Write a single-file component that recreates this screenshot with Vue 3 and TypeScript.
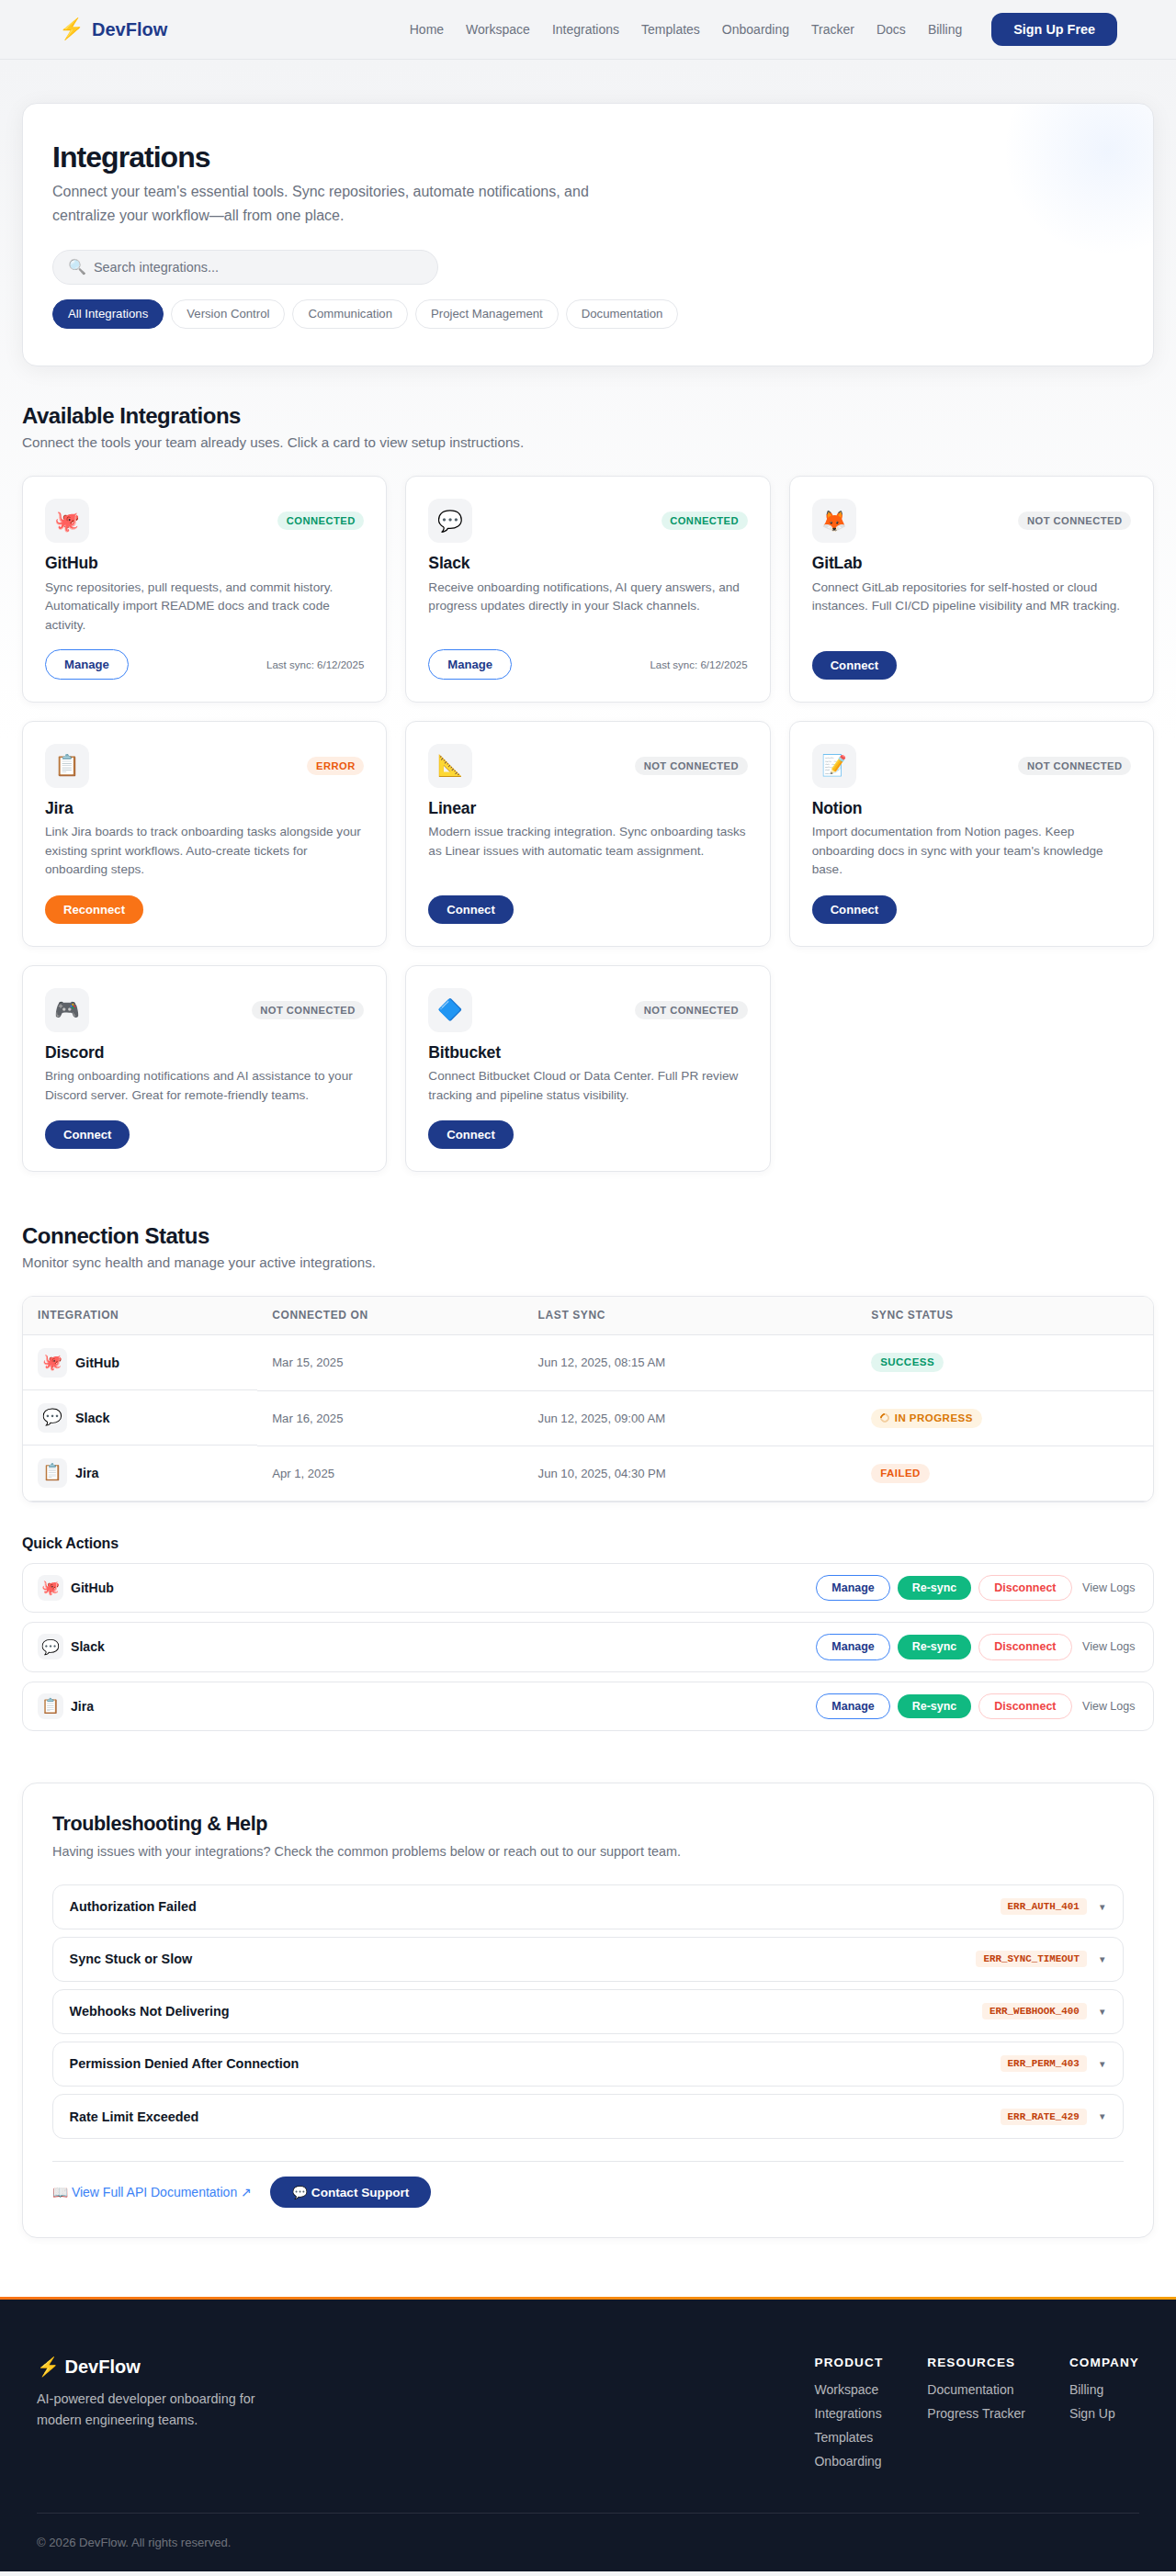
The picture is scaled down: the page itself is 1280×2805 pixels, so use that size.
<script setup lang="ts">
interface Integration {
  icon: string
  name: string
  description: string
  status: 'connected' | 'error' | 'idle'
  lastSync?: string
}

interface Connection {
  icon: string
  name: string
  connectedOn: string
  lastSync: string
  state: 'success' | 'progress' | 'failed'
}

const navLinks: string[] = ['Home', 'Workspace', 'Integrations', 'Templates', 'Onboarding', 'Tracker', 'Docs', 'Billing']

const filters: string[] = ['All Integrations', 'Version Control', 'Communication', 'Project Management', 'Documentation']

const integrations: Integration[] = [
  { icon: '🐙', name: 'GitHub', description: 'Sync repositories, pull requests, and commit history. Automatically import README docs and track code activity.', status: 'connected', lastSync: '6/12/2025' },
  { icon: '💬', name: 'Slack', description: 'Receive onboarding notifications, AI query answers, and progress updates directly in your Slack channels.', status: 'connected', lastSync: '6/12/2025' },
  { icon: '🦊', name: 'GitLab', description: 'Connect GitLab repositories for self-hosted or cloud instances. Full CI/CD pipeline visibility and MR tracking.', status: 'idle' },
  { icon: '📋', name: 'Jira', description: 'Link Jira boards to track onboarding tasks alongside your existing sprint workflows. Auto-create tickets for onboarding steps.', status: 'error' },
  { icon: '📐', name: 'Linear', description: 'Modern issue tracking integration. Sync onboarding tasks as Linear issues with automatic team assignment.', status: 'idle' },
  { icon: '📝', name: 'Notion', description: "Import documentation from Notion pages. Keep onboarding docs in sync with your team's knowledge base.", status: 'idle' },
  { icon: '🎮', name: 'Discord', description: 'Bring onboarding notifications and AI assistance to your Discord server. Great for remote-friendly teams.', status: 'idle' },
  { icon: '🔷', name: 'Bitbucket', description: 'Connect Bitbucket Cloud or Data Center. Full PR review tracking and pipeline status visibility.', status: 'idle' },
]

const statusLabel: Record<Integration['status'], string> = {
  connected: 'CONNECTED',
  error: 'ERROR',
  idle: 'NOT CONNECTED',
}

const actionLabel: Record<Integration['status'], string> = {
  connected: 'Manage',
  error: 'Reconnect',
  idle: 'Connect',
}

const connections: Connection[] = [
  { icon: '🐙', name: 'GitHub', connectedOn: 'Mar 15, 2025', lastSync: 'Jun 12, 2025, 08:15 AM', state: 'success' },
  { icon: '💬', name: 'Slack', connectedOn: 'Mar 16, 2025', lastSync: 'Jun 12, 2025, 09:00 AM', state: 'progress' },
  { icon: '📋', name: 'Jira', connectedOn: 'Apr 1, 2025', lastSync: 'Jun 10, 2025, 04:30 PM', state: 'failed' },
]

const stateLabel: Record<Connection['state'], string> = {
  success: 'SUCCESS',
  progress: 'IN PROGRESS',
  failed: 'FAILED',
}

const issues: { title: string; code: string }[] = [
  { title: 'Authorization Failed', code: 'ERR_AUTH_401' },
  { title: 'Sync Stuck or Slow', code: 'ERR_SYNC_TIMEOUT' },
  { title: 'Webhooks Not Delivering', code: 'ERR_WEBHOOK_400' },
  { title: 'Permission Denied After Connection', code: 'ERR_PERM_403' },
  { title: 'Rate Limit Exceeded', code: 'ERR_RATE_429' },
]

const footerColumns: { heading: string; links: string[] }[] = [
  { heading: 'PRODUCT', links: ['Workspace', 'Integrations', 'Templates', 'Onboarding'] },
  { heading: 'RESOURCES', links: ['Documentation', 'Progress Tracker'] },
  { heading: 'COMPANY', links: ['Billing', 'Sign Up'] },
]
</script>

<template>
  <div class="page">
    <header class="topbar">
      <div class="logo"><span class="logo-mark">⚡</span><span>DevFlow</span></div>
      <nav class="nav">
        <a v-for="link in navLinks" :key="link">{{ link }}</a>
        <button class="signup">Sign Up Free</button>
      </nav>
    </header>

    <main class="main">
      <section class="hero">
        <h1>Integrations</h1>
        <p>Connect your team's essential tools. Sync repositories, automate notifications, and centralize your workflow—all from one place.</p>
        <div class="search"><span class="search-icon">🔍</span><span>Search integrations...</span></div>
        <div class="filters">
          <button v-for="(f, i) in filters" :key="f" class="chip" :class="{ active: i === 0 }">{{ f }}</button>
        </div>
      </section>

      <section class="section available">
        <h2>Available Integrations</h2>
        <p class="sub">Connect the tools your team already uses. Click a card to view setup instructions.</p>
        <div class="grid">
          <article v-for="item in integrations" :key="item.name" class="card">
            <div class="card-head">
              <span class="icon icon-lg">{{ item.icon }}</span>
              <span class="status" :class="item.status">{{ statusLabel[item.status] }}</span>
            </div>
            <h3>{{ item.name }}</h3>
            <p>{{ item.description }}</p>
            <div class="card-foot">
              <button class="btn" :class="'btn-' + item.status">{{ actionLabel[item.status] }}</button>
              <span v-if="item.lastSync" class="last-sync">Last sync: {{ item.lastSync }}</span>
            </div>
          </article>
        </div>
      </section>

      <section class="section">
        <h2>Connection Status</h2>
        <p class="sub">Monitor sync health and manage your active integrations.</p>
        <div class="table-wrap">
          <table>
            <colgroup>
              <col class="c1" /><col class="c2" /><col class="c3" /><col />
            </colgroup>
            <thead>
              <tr><th>INTEGRATION</th><th>CONNECTED ON</th><th>LAST SYNC</th><th>SYNC STATUS</th></tr>
            </thead>
            <tbody>
              <tr v-for="row in connections" :key="row.name">
                <td class="name-cell"><span class="icon icon-md">{{ row.icon }}</span><span>{{ row.name }}</span></td>
                <td>{{ row.connectedOn }}</td>
                <td>{{ row.lastSync }}</td>
                <td>
                  <span class="sync" :class="row.state"><i v-if="row.state === 'progress'" class="spinner"></i>{{ stateLabel[row.state] }}</span>
                </td>
              </tr>
            </tbody>
          </table>
        </div>

        <h4>Quick Actions</h4>
        <div class="quick-list">
          <div v-for="row in connections" :key="row.name" class="quick">
            <div class="quick-name"><span class="icon icon-sm">{{ row.icon }}</span><span>{{ row.name }}</span></div>
            <div class="quick-actions">
              <button class="mini manage">Manage</button>
              <button class="mini resync">Re-sync</button>
              <button class="mini disconnect">Disconnect</button>
              <button class="mini logs">View Logs</button>
            </div>
          </div>
        </div>
      </section>

      <section class="help">
        <h2>Troubleshooting &amp; Help</h2>
        <p>Having issues with your integrations? Check the common problems below or reach out to our support team.</p>
        <div class="issues">
          <div v-for="issue in issues" :key="issue.code" class="issue">
            <span class="issue-title">{{ issue.title }}</span>
            <code>{{ issue.code }}</code>
            <span class="caret">▼</span>
          </div>
        </div>
        <div class="help-foot">
          <a>📖 View Full API Documentation ↗</a>
          <button class="contact">💬 Contact Support</button>
        </div>
      </section>
    </main>

    <footer class="footer">
      <div class="accent"></div>
      <div class="footer-top">
        <div class="brand">
          <div class="brand-name">⚡ DevFlow</div>
          <p>AI-powered developer onboarding for modern engineering teams.</p>
        </div>
        <div class="footer-cols">
          <div v-for="col in footerColumns" :key="col.heading" class="footer-col">
            <h5>{{ col.heading }}</h5>
            <a v-for="link in col.links" :key="link">{{ link }}</a>
          </div>
        </div>
      </div>
      <div class="copyright">© 2026 DevFlow. All rights reserved.</div>
    </footer>
  </div>
</template>

<style>
body {
  margin: 0;
  background: #f3f4f6;
}
</style>

<style scoped>
.page {
  font-family: "Liberation Sans", Arial, sans-serif;
  color: #111827;
  line-height: normal;
}
h1, h2, h3, h4, h5, p { margin: 0; }
button {
  font-family: inherit;
  border: 0;
  margin: 0;
  background: none;
  white-space: nowrap;
}

.topbar {
  box-sizing: border-box;
  height: 65px;
  padding: 0 64px;
  display: flex;
  align-items: center;
  justify-content: space-between;
  background: #f3f4f6;
  border-bottom: 1px solid #e5e7eb;
}
.logo {
  display: flex;
  align-items: center;
  gap: 8px;
  font-size: 20px;
  font-weight: 700;
  color: #1e3a8a;
}
.logo-mark { font-size: 22.4px; line-height: 26px; }
.nav {
  display: flex;
  align-items: center;
  gap: 24px;
  font-size: 14px;
  color: #6b7280;
}
.signup {
  height: 36px;
  margin-left: 8px;
  padding: 0 24px;
  border-radius: 12px;
  background: #1e3a8a;
  color: #fff;
  font-size: 14.4px;
  font-weight: 700;
}

.main {
  padding: 47.4px 24px 64px;
  background: linear-gradient(180deg, #f3f4f6 0, #fff 740px);
}

.hero {
  position: relative;
  overflow: hidden;
  padding: 40px 32px;
  border: 1px solid #e5e7eb;
  border-radius: 16px;
  background: #fff;
  box-shadow: 0 4px 24px rgba(17, 24, 39, 0.06);
  margin-bottom: 40px;
}
.hero::after {
  content: "";
  position: absolute;
  top: -64px;
  right: -66px;
  width: 230px;
  height: 230px;
  border-radius: 50%;
  background: radial-gradient(circle, rgba(59, 130, 246, 0.08) 0%, transparent 70%);
}
.hero h1 {
  font-size: 32px;
  line-height: 36px;
  letter-spacing: -0.03em;
  margin-bottom: 6.8px;
}
.hero p {
  max-width: 600px;
  font-size: 16px;
  line-height: 1.6;
  color: #6b7280;
  margin-bottom: 24.4px;
}
.search {
  box-sizing: border-box;
  width: 420px;
  height: 38px;
  padding: 0 16px;
  display: flex;
  align-items: center;
  gap: 8px;
  border: 1px solid #e5e7eb;
  border-radius: 19px;
  background: #f3f4f6;
  color: #6b7280;
  font-size: 14.4px;
}
.search-icon { font-size: 16px; line-height: 20px; opacity: 0.6; }
.filters { display: flex; gap: 8px; margin-top: 16px; }
.chip {
  height: 32px;
  padding: 0 16px;
  border: 1px solid #e5e7eb;
  border-radius: 16px;
  font-size: 13.2px;
  color: #6b7280;
}
.chip.active { background: #1e3a8a; border-color: #1e3a8a; color: #fff; }

.section { margin-bottom: 56px; }
.section.available { margin-bottom: 55.9px; }
.section h2 {
  font-size: 24px;
  line-height: 27px;
  letter-spacing: -0.02em;
  margin-bottom: 4px;
}
.sub {
  font-size: 15.2px;
  line-height: 1.6;
  color: #6b7280;
  margin-bottom: 24px;
}

.grid {
  display: grid;
  grid-template-columns: repeat(3, 1fr);
  gap: 20px;
}
.card {
  display: flex;
  flex-direction: column;
  padding: 24px;
  border: 1px solid #e5e7eb;
  border-radius: 12px;
  background: #fff;
  box-shadow: 0 2px 8px rgba(17, 24, 39, 0.04);
}
.card-head {
  display: flex;
  align-items: center;
  justify-content: space-between;
  margin-bottom: 12px;
}
.icon {
  display: flex;
  align-items: center;
  justify-content: center;
  flex: none;
  background: #f3f4f6;
}
.icon-lg { width: 48px; height: 48px; border-radius: 12px; font-size: 22.4px; }
.icon-md { width: 32px; height: 32px; border-radius: 8px; font-size: 17.6px; }
.icon-sm { width: 28px; height: 28px; border-radius: 8px; font-size: 16px; }
.status {
  padding: 0 9.6px;
  border-radius: 10px;
  font-size: 11.2px;
  line-height: 20px;
  font-weight: 700;
  letter-spacing: 0.04em;
}
.status.connected { background: rgba(16, 185, 129, 0.12); color: #059669; }
.status.error { background: rgba(249, 115, 22, 0.12); color: #ea580c; }
.status.idle { background: rgba(107, 114, 128, 0.1); color: #6b7280; }
.card h3 {
  font-size: 17.6px;
  line-height: 20px;
  letter-spacing: -0.01em;
  margin-bottom: 6.7px;
}
.card p {
  font-size: 13.6px;
  line-height: 1.5;
  color: #6b7280;
  margin-bottom: 15.8px;
}
.card-foot {
  margin-top: auto;
  min-height: 32.3px;
  display: flex;
  align-items: center;
  justify-content: space-between;
}
.btn {
  align-self: flex-end;
  height: 31px;
  padding: 0 20px;
  border-radius: 17px;
  font-size: 13.12px;
  font-weight: 700;
  color: #fff;
}
.btn-idle { background: #1e3a8a; }
.btn-error { background: #f97316; }
.btn-connected { height: 33px; border: 1px solid #3b82f6; color: #1e3a8a; }
.last-sync { padding-top: 1px; font-size: 11.52px; color: #6b7280; }

.table-wrap {
  overflow: hidden;
  border: 1px solid #e5e7eb;
  border-radius: 12px;
  background: #fff;
  box-shadow: 0 2px 8px rgba(17, 24, 39, 0.04);
}
table { width: 100%; border-collapse: collapse; table-layout: fixed; }
.c1 { width: 255.2px; }
.c2 { width: 289.4px; }
.c3 { width: 362.6px; }
th {
  height: 39px;
  padding: 0 16px 1.5px;
  text-align: left;
  font-size: 12px;
  letter-spacing: 0.05em;
  color: #6b7280;
  background: #fafafa;
  border-bottom: 1px solid #e5e7eb;
}
td {
  padding: 13.6px 16px;
  font-size: 13.12px;
  color: #6b7280;
  border-bottom: 1px solid #e5e7eb;
}
td.name-cell {
  display: flex;
  align-items: center;
  gap: 9px;
  padding: 13.6px 16px;
  font-size: 14.4px;
  font-weight: 700;
  color: #111827;
}
.sync {
  display: inline-flex;
  align-items: center;
  gap: 5.6px;
  padding: 0 10px;
  border-radius: 11px;
  font-size: 11.52px;
  line-height: 21px;
  font-weight: 700;
  letter-spacing: 0.04em;
}
.sync.success { background: rgba(16, 185, 129, 0.12); color: #059669; }
.sync.progress { background: rgba(245, 158, 11, 0.12); color: #d97706; }
.sync.failed { background: rgba(249, 115, 22, 0.12); color: #ea580c; }
.spinner {
  box-sizing: border-box;
  width: 10px;
  height: 10px;
  border: 2px solid rgba(217, 119, 6, 0.3);
  border-top-color: #d97706;
  border-radius: 50%;
  transform: rotate(-45deg);
}

h4 {
  margin: 35.7px 0 12px;
  font-size: 16px;
  line-height: 18px;
  letter-spacing: -0.01em;
}
.quick-list { display: flex; flex-direction: column; gap: 10px; }
.quick {
  display: flex;
  align-items: center;
  justify-content: space-between;
  padding: 12px 16px;
  border: 1px solid #e5e7eb;
  border-radius: 12px;
  background: #fff;
}
.quick-name {
  display: flex;
  align-items: center;
  gap: 8px;
  font-size: 14.08px;
  font-weight: 700;
}
.quick-actions { display: flex; align-items: center; gap: 8px; }
.mini {
  height: 26.5px;
  padding: 0 16px;
  border-radius: 15px;
  font-size: 12.48px;
  font-weight: 700;
}
.manage { height: 28.5px; border: 1px solid #3b82f6; color: #1e3a8a; }
.resync { background: #10b981; color: #fff; }
.disconnect { height: 28.5px; border: 1px solid #fecaca; color: #ef4444; }
.logs { padding: 0 3.6px; font-weight: 400; color: #6b7280; }

.help {
  padding: 32px;
  border: 1px solid #e5e7eb;
  border-radius: 16px;
  background: #fff;
  box-shadow: 0 2px 8px rgba(17, 24, 39, 0.04);
}
.help h2 {
  font-size: 21.6px;
  line-height: 24px;
  letter-spacing: -0.02em;
  margin-bottom: 6.4px;
}
.help p {
  font-size: 14.4px;
  line-height: 1.6;
  color: #6b7280;
  margin-bottom: 24px;
}
.issues { display: flex; flex-direction: column; gap: 8px; }
.issue {
  box-sizing: border-box;
  height: 49.1px;
  display: flex;
  align-items: center;
  gap: 12px;
  padding: 0 17.6px;
  border: 1px solid #e5e7eb;
  border-radius: 12px;
}
.issue-title { flex: 1; font-size: 14.4px; font-weight: 700; }
code {
  padding: 0 8px;
  border-radius: 4px;
  background: rgba(249, 115, 22, 0.1);
  color: #c2410c;
  font-family: "Liberation Mono", "Courier New", monospace;
  font-size: 10.88px;
  line-height: 18px;
  font-weight: 700;
}
.caret { font-size: 9.6px; color: #6b7280; }
.help-foot {
  display: flex;
  align-items: center;
  gap: 20px;
  margin-top: 24px;
  padding-top: 16px;
  border-top: 1px solid #e5e7eb;
}
.help-foot a { font-size: 14px; line-height: 18px; color: #3b82f6; }
.contact {
  height: 34px;
  padding: 0 24px;
  border-radius: 17px;
  background: #1e3a8a;
  color: #fff;
  font-size: 13.6px;
  font-weight: 700;
}

.footer {
  height: 299px;
  background: #111827;
}
.accent {
  height: 3px;
  background: linear-gradient(90deg, #f97316, #f59e0b);
}
.footer-top {
  display: flex;
  justify-content: space-between;
  padding: 61.2px 40px 0;
}
.brand-name {
  font-size: 20px;
  line-height: 24px;
  font-weight: 700;
  color: #fff;
  margin-bottom: 12px;
}
.brand p {
  width: 280px;
  font-size: 14.4px;
  line-height: 1.6;
  color: rgba(255, 255, 255, 0.7);
}
.footer-cols { display: flex; gap: 48px; }
.footer-col {
  display: flex;
  flex-direction: column;
  gap: 10px;
  font-size: 14px;
  line-height: 16px;
  color: rgba(255, 255, 255, 0.7);
}
h5 {
  margin-bottom: 3.8px;
  font-size: 13.6px;
  line-height: 15px;
  letter-spacing: 0.08em;
  color: #fff;
}
.copyright {
  margin: 48.2px 40px 0;
  padding-top: 24px;
  border-top: 1px solid rgba(255, 255, 255, 0.1);
  font-size: 13.12px;
  color: rgba(255, 255, 255, 0.4);
}
</style>
